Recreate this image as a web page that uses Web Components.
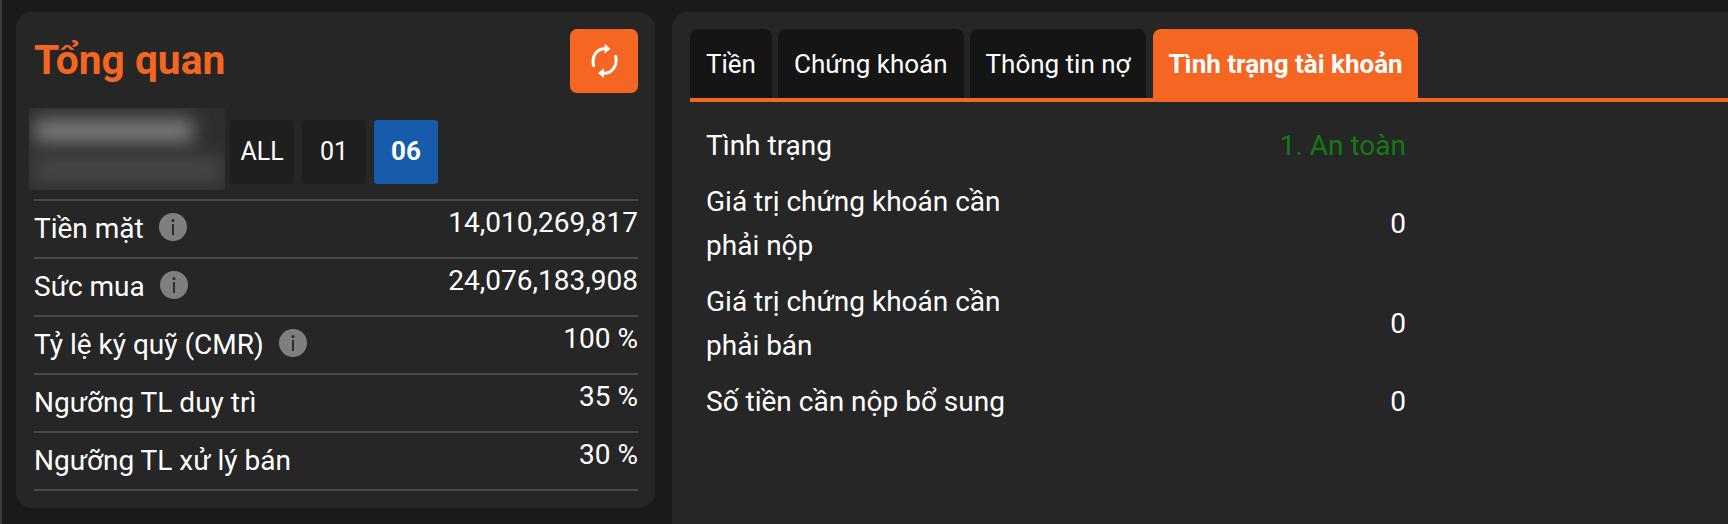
<!DOCTYPE html>
<html lang="vi">
<head>
<meta charset="utf-8">
<title>Tổng quan</title>
<style>
  html, body { margin: 0; height: 100%; }
  body {
    background: #1a1a1a;
    color: #fff;
    font-family: Roboto, "Liberation Sans", sans-serif;
    overflow: hidden;
  }
  .page {
    display: flex;
    align-items: flex-start;
    gap: 17px;
    height: 524px;
    box-sizing: border-box;
    padding: 12px 0 0 14px;
    border-left: 2px solid #3a3a3a;
  }
</style>
</head>
<body>
<div class="page">
  <overview-card>
    <info-row label="Tiền mặt" value="14,010,269,817" info></info-row>
    <info-row label="Sức mua" value="24,076,183,908" info></info-row>
    <info-row label="Tỷ lệ ký quỹ (CMR)" value="100 %" info></info-row>
    <info-row label="Ngưỡng TL duy trì" value="35 %"></info-row>
    <info-row label="Ngưỡng TL xử lý bán" value="30 %"></info-row>
  </overview-card>
  <detail-panel>
    <status-row label="Tình trạng" value="1. An toàn" tone="good"></status-row>
    <status-row label="Giá trị chứng khoán cần phải nộp" value="0"></status-row>
    <status-row label="Giá trị chứng khoán cần phải bán" value="0"></status-row>
    <status-row label="Số tiền cần nộp bổ sung" value="0"></status-row>
  </detail-panel>
</div>

<script>
class InfoRow extends HTMLElement {
  constructor() {
    super();
    this.shadow = this.attachShadow({ mode: "open" });
  }

  connectedCallback() {
    let label = this.getAttribute("label");
    let value = this.getAttribute("value");
    let icon = this.hasAttribute("info") ? `
      <svg viewBox="0 0 28 28" width="28" height="28">
        <circle cx="14" cy="14" r="14" fill="#7f7f7f"/>
        <circle cx="14" cy="7.5" r="1.5" fill="#2b2b2b"/>
        <rect x="13" y="11" width="2" height="11" fill="#2b2b2b"/>
      </svg>` : "";

    this.shadow.innerHTML = `
      <style>
        :host {
          display: flex;
          justify-content: space-between;
          height: 56px;
          border-bottom: 2px solid #4a4a4a;
          font-size: 28px;
        }
        .label {
          display: flex;
          align-items: center;
          gap: 15px;
          padding-bottom: 1px;
        }
        svg { margin-top: -3px; }
        .value { padding-top: 5px; line-height: 33px; }
      </style>
      <div class="label"><span>${label}</span>${icon}</div>
      <div class="value">${value}</div>
    `;
  }
}
customElements.define("info-row", InfoRow);

class OverviewCard extends HTMLElement {
  constructor() {
    super();
    this.shadow = this.attachShadow({ mode: "open" });
  }

  connectedCallback() {
    this.shadow.innerHTML = `
      <style>
        :host {
          display: block;
          box-sizing: border-box;
          width: 639px;
          height: 496px;
          padding: 17px 17px 0 18px;
          background: #262626;
          border-radius: 16px;
        }
        header {
          display: flex;
          justify-content: space-between;
          height: 64px;
        }
        h1 {
          margin: 0;
          font-size: 40.7px;
          font-weight: 700;
          line-height: 62px;
          color: #f46621;
        }
        button {
          width: 68px;
          height: 64px;
          padding: 0;
          border: 0;
          border-radius: 7px;
          background: #f46621;
          display: grid;
          place-items: center;
        }
        .accounts {
          display: flex;
          align-items: flex-start;
          gap: 8px;
          margin: 15px 0 0 -5px;
          height: 82px;
        }
        .blur {
          position: relative;
          width: 196px;
          height: 82px;
          margin-right: -3px;
          overflow: hidden;
          background: #2f2f2f;
        }
        .blur i { position: absolute; display: block; filter: blur(9px); }
        .blur i:first-child { left: 6px; top: 11px; width: 158px; height: 24px; background: #7a7a7a; }
        .blur i:last-child { left: 4px; top: 48px; width: 190px; height: 28px; background: #464646; }
        .chip {
          width: 64px;
          height: 64px;
          margin-top: 12px;
          box-sizing: border-box;
          padding-bottom: 2px;
          display: grid;
          place-items: center;
          background: #1f1f1f;
          border-radius: 4px;
          font-size: 25px;
        }
        .chip.on { background: #175cac; font-weight: 700; font-size: 26px; }
        .rows { border-top: 2px solid #4a4a4a; margin-top: 9px; }
      </style>
      <header>
        <h1>Tổng quan</h1>
        <button aria-label="Làm mới">
          <svg viewBox="0 0 27 34" width="27" height="34" fill="none" stroke="#fff" stroke-width="3" stroke-linecap="round">
            <path d="M2.6 21.5C.3 12 6 4.5 14.5 4.7"/>
            <path d="M24.6 12.5C27 21.5 21 29.4 12.5 29.2"/>
            <path d="M13.7 0l5.8 4.8-5.8 4.6z" fill="#fff" stroke="none"/>
            <path d="M12.9 24.3l-5.9 4.6 5.9 5.1z" fill="#fff" stroke="none"/>
          </svg>
        </button>
      </header>
      <div class="accounts">
        <div class="blur"><i></i><i></i></div>
        <div class="chip">ALL</div>
        <div class="chip">01</div>
        <div class="chip on">06</div>
      </div>
      <div class="rows"><slot></slot></div>
    `;
  }
}
customElements.define("overview-card", OverviewCard);

class StatusRow extends HTMLElement {
  constructor() {
    super();
    this.shadow = this.attachShadow({ mode: "open" });
  }

  connectedCallback() {
    let label = this.getAttribute("label");
    let value = this.getAttribute("value");
    let tone = this.getAttribute("tone") || "";

    this.shadow.innerHTML = `
      <style>
        :host {
          display: flex;
          align-items: center;
          justify-content: space-between;
          padding: 6px 0;
          font-size: 28px;
          line-height: 44px;
        }
        .label { width: 320px; }
        .good { color: #137a13; }
      </style>
      <div class="label">${label}</div>
      <div class="${tone}">${value}</div>
    `;
  }
}
customElements.define("status-row", StatusRow);

class DetailPanel extends HTMLElement {
  constructor() {
    super();
    this.shadow = this.attachShadow({ mode: "open" });
  }

  connectedCallback() {
    let tabs = ["Tiền", "Chứng khoán", "Thông tin nợ", "Tình trạng tài khoản"];
    let items = tabs.map((t, i) =>
      `<div class="tab ${i === tabs.length - 1 ? "on" : ""}">${t}</div>`).join("");

    this.shadow.innerHTML = `
      <style>
        :host {
          display: block;
          flex: 1;
          box-sizing: border-box;
          height: 512px;
          padding: 17px 0 0 18px;
          background: #262626;
          border-radius: 16px 0 0 0;
        }
        nav {
          display: flex;
          gap: 6px;
          height: 69px;
          border-bottom: 4px solid #f46621;
        }
        .tab {
          padding: 0 16px;
          background: #151515;
          border-radius: 8px 8px 0 0;
          font-size: 26px;
          line-height: 71px;
        }
        .tab.on { background: #f46621; font-weight: 700; padding: 0 15px; margin-left: 1px; }
        .table { width: 700px; margin: 16px 0 0 16px; }
      </style>
      <nav>${items}</nav>
      <div class="table"><slot></slot></div>
    `;
  }
}
customElements.define("detail-panel", DetailPanel);
</script>
</body>
</html>
